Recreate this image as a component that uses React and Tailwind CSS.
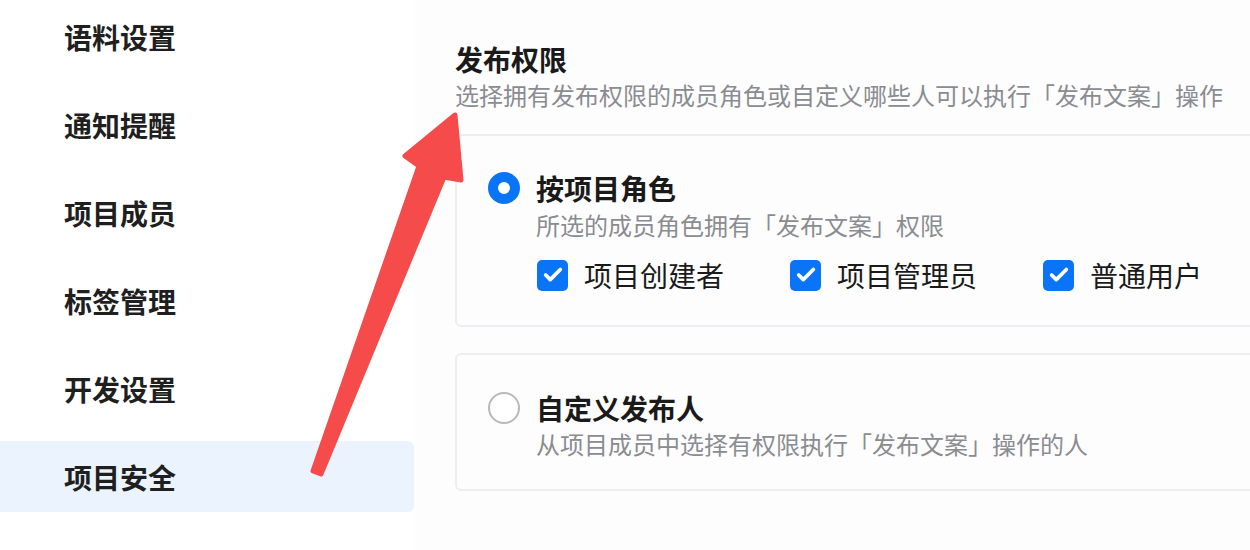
import { Check } from 'lucide-react'

const menu = ['语料设置', '通知提醒', '项目成员', '标签管理', '开发设置', '项目安全']

const roles = ['项目创建者', '项目管理员', '普通用户']

function Radio({ on }) {
  if (on) {
    return <span className="w-[32px] h-[32px] rounded-full border-[10px] border-[#0a74f7] bg-white shrink-0" />
  }
  return <span className="w-[32px] h-[32px] rounded-full border-2 border-[#b8b8b8] bg-white shrink-0" />
}

export default function App() {
  return (
    <div className="relative flex w-[1250px] h-[550px] overflow-hidden bg-white font-['Noto_Sans_CJK_SC','Noto_Sans',sans-serif]">
      <aside className="w-[414px] shrink-0 flex flex-col gap-[17px] pt-[1px] bg-white">
        {menu.map((m, i) => (
          <div
            key={m}
            className={`h-[71px] flex items-center pl-16 text-[28px] font-bold text-[#1f1f1f] ${i === 5 ? 'bg-[#eaf3fe] rounded-r-md' : ''}`}
          >
            {m}
          </div>
        ))}
      </aside>

      <main className="flex-1 bg-[#fdfdfd] pl-[41px] pt-[41px]">
        <h2 className="text-[28px] leading-[36px] font-bold text-[#1a1a1a]">发布权限</h2>
        <p className="mt-[2px] text-[24px] leading-[32px] text-[#8a8c91] whitespace-nowrap">
          选择拥有发布权限的成员角色或自定义哪些人可以执行「发布文案」操作
        </p>

        <div className="mt-[23px] w-[830px] rounded-md border-2 border-[#eceef1] pl-[31px] pt-[34px] pb-[34px]">
          <div className="flex items-center gap-4">
            <Radio on />
            <span className="text-[28px] leading-[36px] font-bold text-[#1a1a1a]">按项目角色</span>
          </div>
          <p className="ml-[48px] mt-[3px] text-[24px] leading-[32px] text-[#8a8c91]">
            所选的成员角色拥有「发布文案」权限
          </p>
          <div className="ml-[49px] mt-[18px] flex items-center gap-[66px]">
            {roles.map(r => (
              <div key={r} className="flex items-center gap-4">
                <span className="w-[31px] h-[31px] rounded-[5px] bg-[#0a74f7] flex items-center justify-center">
                  <Check size={22} strokeWidth={4} className="text-white" />
                </span>
                <span className="text-[28px] leading-[32px] text-[#1a1a1a]">{r}</span>
              </div>
            ))}
          </div>
        </div>

        <div className="mt-[26px] w-[830px] rounded-md border-2 border-[#eceef1] pl-[31px] pt-[35px] pb-[29px]">
          <div className="flex items-center gap-4">
            <Radio />
            <span className="text-[28px] leading-[36px] font-bold text-[#1a1a1a]">自定义发布人</span>
          </div>
          <p className="ml-[48px] mt-[2px] text-[24px] leading-[32px] text-[#8a8c91]">
            从项目成员中选择有权限执行「发布文案」操作的人
          </p>
        </div>
      </main>

      <svg className="absolute left-0 top-0 pointer-events-none" width="1250" height="550">
        <polygon
          points="313,471 321,474 444,177 461,180 455,115 405,156 419,166"
          fill="#f54b4a"
          stroke="#f54b4a"
          strokeWidth="5"
          strokeLinejoin="round"
        />
      </svg>
    </div>
  )
}
